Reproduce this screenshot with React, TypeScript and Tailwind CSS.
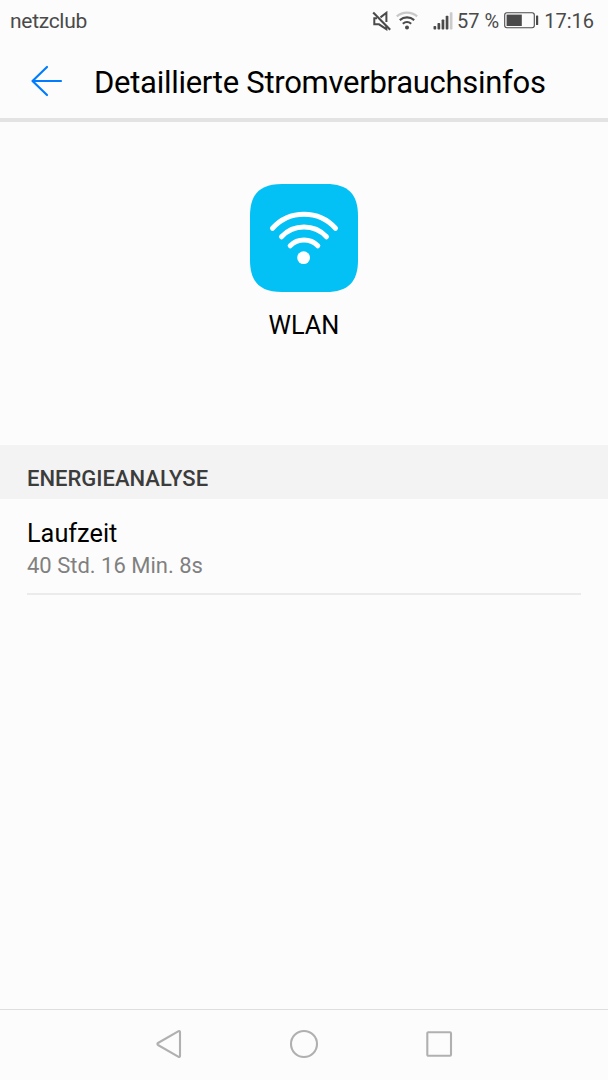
import React from 'react';

const StatusBar: React.FC = () => {
  return (
    <div className="flex h-[42px] items-center justify-between pl-[10px] pr-[14px] text-[#4a4a4a]">
      <span className="text-[21px] leading-[42px] tracking-[-0.3px]">netzclub</span>
      <div className="flex items-center">
        {/* Muted */}
        <svg width="20" height="20" viewBox="0 0 20 20" className="mr-[4px]" fill="none" stroke="currentColor" strokeWidth="2">
          <path d="M8.5 6.4 14.4 1.8V11M14.4 14.7v3.5L7 13.3H2.3V7.2H5" />
          <path d="m1.2 1.4 17 17.3" strokeWidth="2.1" />
        </svg>
        {/* Wi-Fi strength */}
        <svg width="22" height="20" viewBox="0 0 22 20" className="mr-[15px]" fill="none" stroke="currentColor" strokeWidth="2.1">
          <path d="M.8 5.4C6.5.3 15.5.3 21.2 5.4" stroke="#c9c9c9" />
          <path d="M3.8 9.1C8 5.5 14 5.5 18.2 9.1" />
          <path d="M6.8 12.8c2.5-2.1 5.9-2.1 8.4 0" />
          <circle cx="11" cy="16.5" r="2" fill="currentColor" stroke="none" />
        </svg>
        {/* Signal strength */}
        <svg width="20" height="20" viewBox="0 0 20 20" className="mr-[4px]" fill="currentColor">
          <rect x=".5" y="15" width="2.7" height="3.5" rx=".8" />
          <rect x="4.5" y="12" width="2.7" height="6.5" rx=".8" />
          <rect x="8.6" y="8.5" width="2.7" height="10" rx=".8" />
          <rect x="12.7" y="4.8" width="2.7" height="13.7" rx=".8" />
          <rect x="16.8" y="1.2" width="2.7" height="17.3" rx=".8" fill="#cbcbcb" />
        </svg>
        <span className="mr-[5px] text-[20px] leading-[40px]">57 %</span>
        {/* Battery */}
        <svg width="35" height="17" viewBox="0 0 35 17" className="mb-px mr-[5px]">
          <rect x=".7" y=".7" width="29.6" height="15" rx="2.2" fill="none" stroke="currentColor" strokeWidth="1.1" />
          <rect x="2.6" y="2.6" width="15.2" height="11.4" fill="currentColor" />
          <rect x="32" y="3.5" width="2.2" height="9.6" rx=".6" fill="currentColor" />
        </svg>
        <span className="text-[20px] leading-[42px]">17:16</span>
      </div>
    </div>
  );
};

const Header: React.FC = () => {
  return (
    <header className="flex h-[80px] items-center border-b-4 border-[#e3e3e3] pl-[30px]">
      <button aria-label="Zurück" className="text-[#007dff]">
        <svg width="34" height="34" viewBox="0 0 34 34" fill="none" stroke="currentColor" strokeWidth="2.2" strokeLinecap="round" strokeLinejoin="round">
          <path d="M31 18H2.5M17 4 2.5 18 17 32" />
        </svg>
      </button>
      <h1 className="ml-[30px] whitespace-nowrap pt-[5px] text-[31px] leading-[40px] tracking-[-0.28px] text-black">
        Detaillierte Stromverbrauchsinfos
      </h1>
    </header>
  );
};

const WlanIcon: React.FC = () => {
  return (
    <svg width="108" height="108" viewBox="0 0 108 108" fill="none">
      <path
        d="M0 32C0 10 10 0 32 0h44c22 0 32 10 32 32v44c0 22-10 32-32 32H32C10 108 0 98 0 76Z"
        fill="#03c1f4"
      />
      <g stroke="white" strokeWidth="5" strokeLinecap="round">
        <path d="M22.5 44.3a42.5 42.5 0 0 1 63 0" />
        <path d="M31.5 52.8a31 31 0 0 1 45 0" />
        <path d="M40.2 61.8a19.5 19.5 0 0 1 27.6 0" />
      </g>
      <circle cx="53.6" cy="73.7" r="6.4" fill="white" />
    </svg>
  );
};

const NavigationBar: React.FC = () => {
  return (
    <nav className="flex h-[71px] items-center justify-center gap-[105px] border-t border-[#dedede] pb-[2px] text-[#b0b0b0]">
      <svg width="30" height="30" viewBox="0 0 30 30" fill="none" stroke="currentColor" strokeWidth="2.1" strokeLinejoin="round">
        <path d="M26 3v24c0 .9-.7 1.3-1.4.9L4 16c-.8-.5-.8-1.5 0-2L24.6 2.1c.7-.4 1.4 0 1.4.9Z" />
      </svg>
      <svg width="30" height="30" viewBox="0 0 30 30" fill="none" stroke="currentColor" strokeWidth="2.1">
        <circle cx="15" cy="15" r="13" />
      </svg>
      <svg width="30" height="30" viewBox="0 0 30 30" fill="none" stroke="currentColor" strokeWidth="2.1">
        <rect x="3.3" y="3.3" width="23.7" height="23.4" rx="1" />
      </svg>
    </nav>
  );
};

const App: React.FC = () => {
  return (
    <div className="flex h-[1080px] w-[608px] flex-col bg-[#fcfcfc] font-['Roboto',sans-serif]">
      <StatusBar />
      <Header />

      <main className="flex-1">
        {/* App summary */}
        <div className="flex h-[323px] flex-col items-center pt-[62px]">
          <WlanIcon />
          <p className="mt-[17px] text-[25.3px] leading-[34px] text-black">WLAN</p>
        </div>

        <h2 className="h-[54px] bg-[#f3f3f3] px-[27px] pt-[17px] text-[22px] font-medium leading-[34px] text-[#3c3c3c]">
          ENERGIEANALYSE
        </h2>

        <div className="mx-[27px] h-[96px] border-b-2 border-[#ebebeb] pt-[18px]">
          <p className="text-[25.3px] leading-[34px] text-black">Laufzeit</p>
          <p className="text-[22px] leading-[30px] text-[#808080]">40 Std. 16 Min. 8s</p>
        </div>
      </main>

      <NavigationBar />
    </div>
  );
};

export default App;
